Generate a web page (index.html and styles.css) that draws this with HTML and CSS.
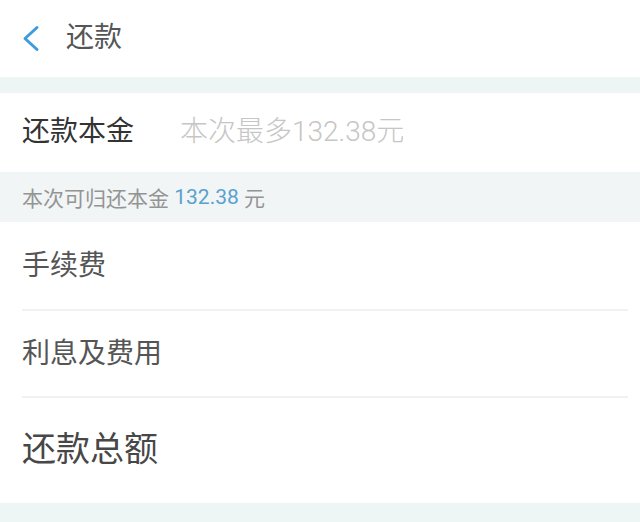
FILE: index.html
```html
<!DOCTYPE html>
<html lang="zh-CN">
<head>
<meta charset="utf-8">
<title>还款</title>
<link rel="stylesheet" href="styles.css">
</head>
<body>
<div class="page">
  <header class="header">
    <svg class="back" width="20" height="28" viewBox="0 0 20 28" aria-hidden="true">
      <path d="M17 2.5 L5 13.5 L17 24.5" fill="none" stroke="#3f9be0" stroke-width="3" stroke-linecap="round" stroke-linejoin="round"/>
    </svg>
    <h1 class="title">还款</h1>
  </header>
  <div class="band band-top"></div>
  <div class="principal">
    <span class="label label-dark">还款本金</span>
    <span class="placeholder">本次最多132.38元</span>
  </div>
  <div class="info">本次可归还本金 <span class="amount">132.38</span> 元</div>
  <div class="list">
    <div class="item item-fee"><span class="label">手续费</span></div>
    <div class="item item-interest"><span class="label">利息及费用</span></div>
    <div class="item item-total"><span class="label label-big">还款总额</span></div>
  </div>
  <div class="band band-bottom"></div>
</div>
</body>
</html>
```

FILE: styles.css
```css
* { box-sizing: border-box; }
html, body { margin: 0; padding: 0; background: #fff; }
body {
  font-family: Roboto, "Noto Sans CJK SC", "Noto Sans", sans-serif;
  width: 640px;
  height: 522px;
  overflow: hidden;
}
.page { display: flex; flex-direction: column; }
.header {
  height: 77px;
  display: flex;
  align-items: center;
  padding-left: 20px;
  gap: 26px;
}
.back { display: block; }
.title {
  margin: 0 0 2px 0;
  font-size: 28px;
  font-weight: 400;
  color: #555;
  line-height: 1;
}
.band { background: #edf5f5; }
.band-top { height: 16px; }
.band-bottom { height: 19px; }
.principal {
  height: 79px;
  display: flex;
  align-items: center;
  padding-left: 22px;
  padding-bottom: 1px;
  gap: 46px;
}
.label {
  font-size: 28px;
  color: #555;
  line-height: 1;
}
.label-dark { color: #333; }
.label-big { font-size: 34px; color: #474747; }
.placeholder {
  font-size: 28px;
  color: #c6c6c6;
  line-height: 1;
  font-weight: 300;
}
.info {
  height: 50px;
  display: flex;
  align-items: center;
  padding-left: 22px;
  padding-bottom: 1px;
  background: #f1f5f6;
  font-size: 21px;
  color: #949494;
  white-space: pre;
}
.amount { color: #5aa2cd; }
.list { display: flex; flex-direction: column; }
.item {
  display: flex;
  align-items: center;
  margin-left: 22px;
  margin-right: 12px;
}
.item-fee { height: 89px; border-bottom: 2px solid #f1f1f1; }
.item-interest { height: 87px; border-bottom: 2px solid #f1f1f1; }
.item-total { height: 105px; padding-bottom: 4px; }
```
